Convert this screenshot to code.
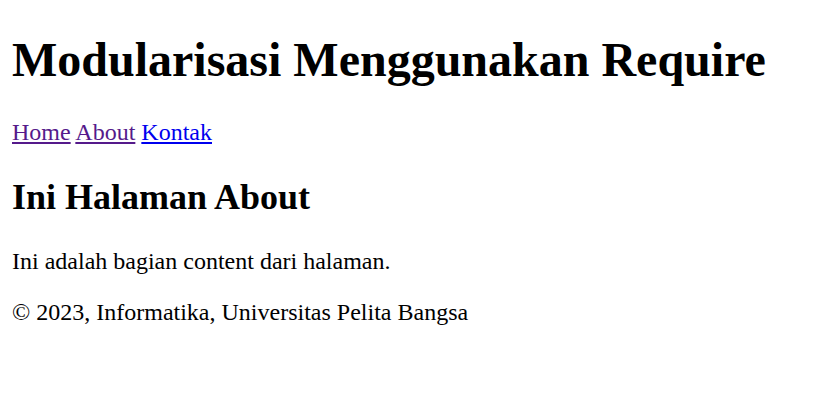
export default function App() {
  return (
    <div className="m-[12px] text-[24px] leading-[normal] text-black" style={{ fontFamily: '"Liberation Serif", "Times New Roman", serif' }}>
      <h1 className="text-[48px] font-bold my-[32px] leading-[normal]">Modularisasi Menggunakan Require</h1>
      <nav className="leading-[normal]">
        <a href="#" className="underline text-[#551a8b]">Home</a>{" "}
        <a href="#" className="underline text-[#551a8b]">About</a>{" "}
        <a href="#" className="underline text-[#0000ee]">Kontak</a>
      </nav>
      <h2 className="text-[36px] font-bold my-[30px] leading-[normal]">Ini Halaman About</h2>
      <p className="my-[24px] leading-[normal]">Ini adalah bagian content dari halaman.</p>
      <p className="my-[24px] leading-[normal]">© 2023, Informatika, Universitas Pelita Bangsa</p>
    </div>
  );
}
